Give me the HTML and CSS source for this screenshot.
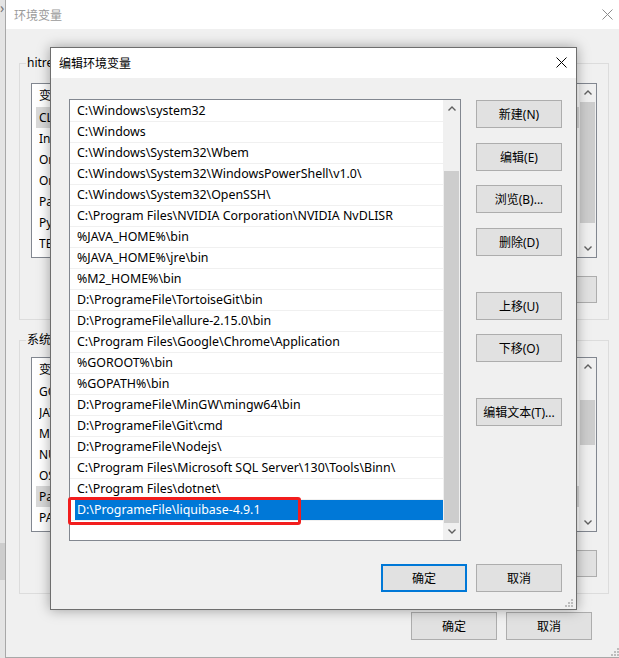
FILE: index.html
```html
<!DOCTYPE html>
<html lang="zh-CN">
<head>
<meta charset="utf-8">
<title>编辑环境变量</title>
<link rel="stylesheet" href="styles.css">
</head>
<body>
<div class="desk">
  <div class="side-chevron">›</div>
  <div class="side-block"></div>

  <div class="win bgwin">
    <div class="titlebar bg-title">
      <span class="title">环境变量</span>
      <svg class="close bg-close" width="11" height="11" viewBox="0 0 11 11"><path d="M0.5 0.5 L10.5 10.5 M10.5 0.5 L0.5 10.5" stroke="#8c8c8c" stroke-width="1" fill="none"/></svg>
    </div>
    <div class="bg-body">
      <div class="group g1">
        <span class="legend">hitre 的用户变量(U)</span>
        <div class="lv">
          <div class="lv-main">
            <div class="lv-head"><span class="c1">变量</span></div>
            <div class="lv-row sel"><span class="c1">CLASSPATH</span></div>
            <div class="lv-row"><span class="c1">IntelliJ IDEA</span></div>
            <div class="lv-row"><span class="c1">OneDrive</span></div>
            <div class="lv-row"><span class="c1">OneDriveConsumer</span></div>
            <div class="lv-row"><span class="c1">Path</span></div>
            <div class="lv-row"><span class="c1">PyCharm</span></div>
            <div class="lv-row"><span class="c1">TEMP</span></div>
          </div>
          <div class="vscroll">
            <div class="arr"><svg width="8" height="5" viewBox="0 0 8 5"><path d="M0.5 4.5 L4 1 L7.5 4.5" stroke="#606060" stroke-width="1.4" fill="none"/></svg></div>
            <div class="thumb t1"></div>
            <div class="track"></div>
            <div class="arr"><svg width="8" height="5" viewBox="0 0 8 5"><path d="M0.5 0.5 L4 4 L7.5 0.5" stroke="#606060" stroke-width="1.4" fill="none"/></svg></div>
          </div>
        </div>
        <div class="btnrow">
          <button class="btn">新建(N)...</button>
          <button class="btn">编辑(E)...</button>
          <button class="btn">删除(D)</button>
        </div>
      </div>

      <div class="group g2">
        <span class="legend">系统变量(S)</span>
        <div class="lv">
          <div class="lv-main">
            <div class="lv-head"><span class="c1">变量</span></div>
            <div class="lv-row"><span class="c1">GOPATH</span></div>
            <div class="lv-row"><span class="c1">JAVA_HOME</span></div>
            <div class="lv-row"><span class="c1">M2_HOME</span></div>
            <div class="lv-row"><span class="c1">NUMBER_OF_PROCESSORS</span></div>
            <div class="lv-row"><span class="c1">OS</span></div>
            <div class="lv-row sel"><span class="c1">Path</span></div>
            <div class="lv-row"><span class="c1">PATHEXT</span></div>
          </div>
          <div class="vscroll">
            <div class="arr"><svg width="8" height="5" viewBox="0 0 8 5"><path d="M0.5 4.5 L4 1 L7.5 4.5" stroke="#606060" stroke-width="1.4" fill="none"/></svg></div>
            <div class="thumb t2"></div>
            <div class="track"></div>
            <div class="arr"><svg width="8" height="5" viewBox="0 0 8 5"><path d="M0.5 0.5 L4 4 L7.5 0.5" stroke="#606060" stroke-width="1.4" fill="none"/></svg></div>
          </div>
        </div>
        <div class="btnrow">
          <button class="btn">新建(W)...</button>
          <button class="btn">编辑(I)...</button>
          <button class="btn">删除(L)</button>
        </div>
      </div>

      <div class="footer bg-footer">
        <button class="btn">确定</button>
        <button class="btn">取消</button>
      </div>
    </div>
    <svg class="grip bg-grip" width="9" height="9" viewBox="0 0 9 9"><g fill="#bdbdbd"><rect x="6" y="0" width="2" height="2"/><rect x="3" y="3" width="2" height="2"/><rect x="6" y="3" width="2" height="2"/><rect x="0" y="6" width="2" height="2"/><rect x="3" y="6" width="2" height="2"/><rect x="6" y="6" width="2" height="2"/></g></svg>
  </div>

  <div class="win dlg">
    <div class="titlebar dlg-title">
      <span class="title">编辑环境变量</span>
      <svg class="close dlg-close" width="11" height="11" viewBox="0 0 11 11"><path d="M0.5 0.5 L10.5 10.5 M10.5 0.5 L0.5 10.5" stroke="#000" stroke-width="1" fill="none"/></svg>
    </div>
    <div class="dlg-body">
      <div class="dlg-main">
        <div class="plist">
          <div class="plist-rows">
            <div class="prow">C:\Windows\system32</div>
            <div class="prow">C:\Windows</div>
            <div class="prow">C:\Windows\System32\Wbem</div>
            <div class="prow">C:\Windows\System32\WindowsPowerShell\v1.0\</div>
            <div class="prow">C:\Windows\System32\OpenSSH\</div>
            <div class="prow">C:\Program Files\NVIDIA Corporation\NVIDIA NvDLISR</div>
            <div class="prow">%JAVA_HOME%\bin</div>
            <div class="prow">%JAVA_HOME%\jre\bin</div>
            <div class="prow">%M2_HOME%\bin</div>
            <div class="prow">D:\ProgrameFile\TortoiseGit\bin</div>
            <div class="prow">D:\ProgrameFile\allure-2.15.0\bin</div>
            <div class="prow">C:\Program Files\Google\Chrome\Application</div>
            <div class="prow">%GOROOT%\bin</div>
            <div class="prow">%GOPATH%\bin</div>
            <div class="prow">D:\ProgrameFile\MinGW\mingw64\bin</div>
            <div class="prow">D:\ProgrameFile\Git\cmd</div>
            <div class="prow">D:\ProgrameFile\Nodejs\</div>
            <div class="prow">C:\Program Files\Microsoft SQL Server\130\Tools\Binn\</div>
            <div class="prow">C:\Program Files\dotnet\</div>
            <div class="prow psel"><span>D:\ProgrameFile\liquibase-4.9.1</span></div>
          </div>
          <div class="vscroll pscroll">
            <div class="arr"><svg width="8" height="5" viewBox="0 0 8 5"><path d="M0.5 4.5 L4 1 L7.5 4.5" stroke="#606060" stroke-width="1.4" fill="none"/></svg></div>
            <div class="track ptrack"></div>
            <div class="thumb pthumb"></div>
            <div class="arr"><svg width="8" height="5" viewBox="0 0 8 5"><path d="M0.5 0.5 L4 4 L7.5 0.5" stroke="#606060" stroke-width="1.4" fill="none"/></svg></div>
          </div>
          <div class="redmark"></div>
        </div>
        <div class="btncol">
          <button class="btn b-new">新建(N)</button>
          <button class="btn b-edit">编辑(E)</button>
          <button class="btn b-browse">浏览(B)...</button>
          <button class="btn b-del">删除(D)</button>
          <button class="btn b-up">上移(U)</button>
          <button class="btn b-down">下移(O)</button>
          <button class="btn b-text">编辑文本(T)...</button>
        </div>
      </div>
      <div class="footer dlg-footer">
        <button class="btn default">确定</button>
        <button class="btn">取消</button>
      </div>
    </div>
    <svg class="grip dlg-grip" width="9" height="9" viewBox="0 0 9 9"><g fill="#bdbdbd"><rect x="6" y="0" width="2" height="2"/><rect x="3" y="3" width="2" height="2"/><rect x="6" y="3" width="2" height="2"/><rect x="0" y="6" width="2" height="2"/><rect x="3" y="6" width="2" height="2"/><rect x="6" y="6" width="2" height="2"/></g></svg>
  </div>
</div>
</body>
</html>
```

FILE: styles.css
```css
* { box-sizing: border-box; }
html, body { margin: 0; padding: 0; }
body {
  width: 619px;
  height: 658px;
  overflow: hidden;
  background: #e4e4e4;
  font-family: "Noto Sans", "Noto Sans CJK SC", sans-serif;
  font-size: 12px;
  color: #000;
}
.desk { position: relative; width: 619px; height: 658px; overflow: hidden; }

.side-chevron {
  position: absolute; left: 0; top: 0; font-size: 14px; line-height: 16px; color: #777;
}
.side-block {
  position: absolute; left: 0; top: 543px; width: 5px; height: 37px; background: #cdcdcd;
}

/* generic window */
.win { position: absolute; background: #f0f0f0; }
.titlebar { background: #fff; display: flex; align-items: center; position: relative; }
.close { position: absolute; }
.btn {
  font-family: "Noto Sans", "Noto Sans CJK SC", sans-serif;
  font-size: 12px;
  color: #000;
  background: #e1e1e1;
  border: 1px solid #adadad;
  border-radius: 0;
  padding: 0;
  width: 86px;
  height: 28px;
  margin: 0;
}
.btn.default { border: 2px solid #0078d7; }
.grip { position: absolute; }

/* background window */
.bgwin {
  left: 5px; top: 0;
  width: 620px; height: 658px;
  border-left: 1px solid #a8a8a8;
  border-bottom: 1px solid #a8a8a8;
  display: flex; flex-direction: column;
}
.bg-title { height: 29px; padding-left: 8px; }
.bg-title .title { color: #9a9a9a; }
.bg-close { left: 596px; top: 9px; }
.bg-body { padding: 34px 16px 0 13px; display: flex; flex-direction: column; }
.group {
  position: relative;
  border: 1px solid #dcdcdc;
  padding: 19px 11px 16px 11px;
}
.group.g2 { margin-top: 20px; padding-top: 16px; }
.legend {
  position: absolute; left: 6px; top: -9px;
  background: #f0f0f0; padding: 0 1px; line-height: 16px;
  white-space: nowrap;
}
.lv {
  height: 175px;
  border: 1px solid #828790;
  background: #fff;
  display: flex;
}
.lv-main { flex: 1; overflow: hidden; }
.lv-head { height: 23px; line-height: 23px; display: flex; padding-left: 7px; }
.lv-row { height: 21px; line-height: 21px; display: flex; padding-left: 7px; white-space: nowrap; }
.lv-row.sel { background: #d9d9d9; margin-left: 4px; padding-left: 3px; }
.c1 { width: 180px; flex: none; overflow: hidden; }

.vscroll { width: 17px; background: #f0f0f0; display: flex; flex-direction: column; flex: none; }
.arr { height: 17px; display: flex; align-items: center; justify-content: center; flex: none; }
.thumb { background: #cdcdcd; margin: 0 1px; flex: none; }
.track { flex: 1; }
.t1 { margin-top: 1px; height: 121px; }
.t2 { margin-top: 25px; height: 45px; }

.btnrow { display: flex; justify-content: flex-end; gap: 9px; margin-top: 18px; }
.btnrow .btn { height: 27px; width: 86px; }

.bg-footer { display: flex; justify-content: flex-end; gap: 9px; margin-top: 18px; padding-right: 17px; }
.bg-footer .btn { height: 28px; }
.bg-grip { left: 605px; top: 648px; }

/* foreground dialog */
.dlg {
  left: 50px; top: 47px;
  width: 527px; height: 563px;
  border: 1px solid #6e6e6e;
  box-shadow: 0 0 12px rgba(0, 0, 0, 0.35);
  display: flex; flex-direction: column;
}
.dlg-title { height: 30px; padding-left: 8px; flex: none; }
.dlg-close { left: 505px; top: 9px; }
.dlg-body { padding: 21px 14px 16px 18px; display: flex; flex-direction: column; }
.dlg-main { display: flex; gap: 15px; }

.plist {
  position: relative;
  width: 392px; height: 442px;
  border: 1px solid #828790;
  background: #fff;
  display: flex;
}
.plist-rows { flex: 1; overflow: hidden; padding-top: 1px; }
.prow {
  height: 21px;
  line-height: 20px;
  font-size: 12.4px;
  border-bottom: 1px solid #f0f0f0;
  padding-left: 7px;
  white-space: nowrap;
  overflow: hidden;
}
.prow.psel { padding-left: 5px; }
.prow.psel span {
  display: block;
  background: #0078d7;
  color: #fff;
  padding-left: 2px;
  height: 20px;
}
.pscroll { width: 17px; }
.ptrack { flex: none; height: 54px; }
.pthumb { flex: 1; }

.redmark {
  position: absolute;
  left: -2px; top: 397px;
  width: 233px; height: 28px;
  border: 3px solid #f21d1d;
  border-radius: 3px;
}

.btncol { display: flex; flex-direction: column; width: 86px; }
.btncol .btn { height: 28px; flex: none; }
.b-new { margin-top: 1px; }
.b-edit { margin-top: 15px; }
.b-browse { margin-top: 14px; }
.b-del { margin-top: 15px; }
.b-up { margin-top: 36px; }
.b-down { margin-top: 14px; }
.b-text { margin-top: 36px; }

.dlg-footer { display: flex; justify-content: flex-end; gap: 9px; margin-top: 23px; }
.dlg-grip { left: 514px; top: 551px; }
```
